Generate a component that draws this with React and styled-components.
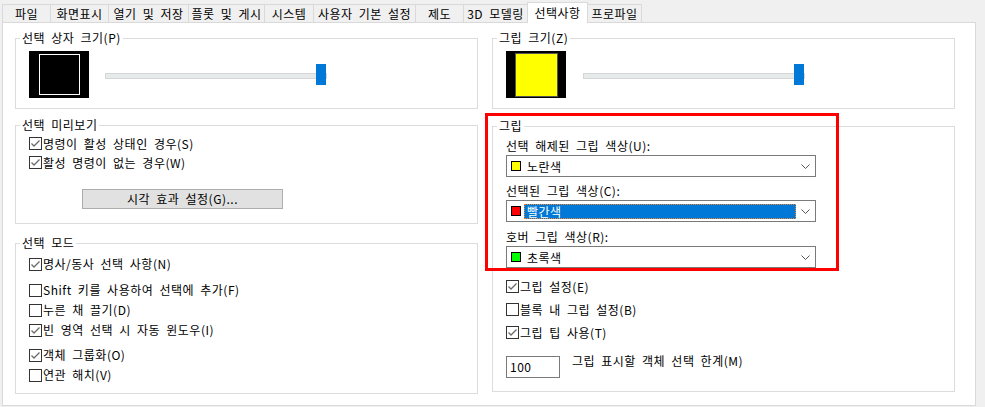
import styled, { createGlobalStyle, css } from "styled-components";

const GlobalStyle = createGlobalStyle`
  html, body { margin: 0; padding: 0; background: #f0f0f0; }
  body {
    font-family: "Noto Sans CJK KR", "Noto Sans", sans-serif;
    font-size: 12px;
    color: #000;
    letter-spacing: 0.5px;
    word-spacing: 3px;
  }
  * { box-sizing: border-box; }
`;

const Window = styled.div`
  width: 985px;
  height: 407px;
  padding: 2px 0 0 2px;
  background: #f0f0f0;
  overflow: hidden;
`;

const TabStrip = styled.div`
  display: flex;
  align-items: flex-end;
  height: 20px;
`;

const Tab = styled.div`
  position: relative;
  z-index: ${(p) => (p.$active ? 2 : 0)};
  display: flex;
  align-items: center;
  justify-content: center;
  width: ${(p) => p.$w}px;
  height: ${(p) => (p.$active ? 21 : 18)}px;
  margin-left: ${(p) => (p.$first ? 0 : -1)}px;
  margin-bottom: ${(p) => (p.$active ? -1 : 0)}px;
  border: 1px solid #d9d9d9;
  border-bottom: none;
  background: ${(p) => (p.$active ? "#fff" : "#f0f0f0")};
  line-height: 14px;
  white-space: nowrap;
`;

const Panel = styled.div`
  display: flex;
  gap: 14px;
  width: 974px;
  height: 384px;
  padding-left: 12px;
  border: 1px solid #d9d9d9;
  background: #fff;
`;

const Column = styled.div`
  position: relative;
  display: flex;
  flex-direction: column;
  width: 463px;
`;

const Group = styled.fieldset`
  margin: ${(p) => p.$mt}px 0 0;
  padding: 0;
  min-width: 0;
  border: 1px solid #dcdcdc;
`;

const Legend = styled.legend`
  margin-left: 4px;
  padding: 0 2px;
  line-height: 14px;
`;

const SizeRow = styled.div`
  display: flex;
  align-items: center;
  padding: 6px 0 10px 13px;
`;

const Preview = styled.div`
  display: flex;
  align-items: center;
  justify-content: center;
  width: 60px;
  height: 47px;
  background: #000;
  flex: none;
`;

const PickBox = styled.div`
  width: 41px;
  height: 41px;
  border: 1px solid #fff;
`;

const GripBox = styled.div`
  width: 43px;
  height: 44px;
  border: 1px solid #555;
  background: #ffff00;
`;

const Slider = styled.div`
  position: relative;
  display: flex;
  justify-content: flex-end;
  align-items: center;
  width: 222px;
  height: 21px;
  margin-left: ${(p) => p.$ml}px;
  padding-right: 1px;

  &::before {
    content: "";
    position: absolute;
    left: 0;
    right: 0;
    top: 9px;
    height: 4px;
    border: 1px solid #d6d6d6;
    background: #e7eaea;
  }
`;

const Thumb = styled.div`
  position: relative;
  width: 10px;
  height: 21px;
  background: #0078d7;
`;

const Body = styled.div`
  display: flex;
  flex-direction: column;
  align-items: flex-start;
  padding: ${(p) => p.$pad};
`;

const CheckRow = styled.div`
  display: flex;
  align-items: center;
  height: ${(p) => p.$h || 20}px;
  margin-top: ${(p) => p.$mt || 0}px;
  line-height: 14px;
  white-space: nowrap;
`;

const Box = styled.span`
  display: flex;
  align-items: center;
  justify-content: center;
  flex: none;
  width: 13px;
  height: 13px;
  margin-right: 1px;
  border: 1px solid #333;
  background: #fff;
`;

const Button = styled.div`
  display: flex;
  align-items: center;
  justify-content: center;
  width: 201px;
  height: 20px;
  margin: 17px 0 0 53px;
  border: 1px solid #adadad;
  background: #e1e1e1;
  line-height: 14px;
`;

const FieldLabel = styled.div`
  margin: ${(p) => p.$mt || 0}px 0 2px;
  line-height: 14px;
`;

const Combo = styled.div`
  display: flex;
  align-items: center;
  width: 310px;
  height: 22px;
  padding-left: 4px;
  border: 1px solid #7a7a7a;
  background: #fff;
`;

const Swatch = styled.span`
  flex: none;
  width: 10px;
  height: 10px;
  margin-right: 3px;
  border: 1px solid #000;
  background: ${(p) => p.$color};
`;

const ComboValue = styled.span`
  flex: 1;
  height: 15px;
  padding-left: 2px;
  line-height: 13px;
  border: 1px solid transparent;
  ${(p) =>
    p.$selected &&
    css`
      background: #0078d7;
      color: #fff;
      border: 1px dotted #f8872c;
    `}
`;

const Arrow = styled.span`
  display: flex;
  justify-content: center;
  width: 19px;
  flex: none;
`;

const NumRow = styled.div`
  display: flex;
  align-items: flex-start;
  margin-top: 12px;
`;

const NumInput = styled.div`
  display: flex;
  align-items: center;
  width: 54px;
  height: 22px;
  padding-left: 3px;
  border: 1px solid #7a7a7a;
  line-height: 14px;
`;

const NumLabel = styled.div`
  margin: -2px 0 0 12px;
  line-height: 14px;
`;

const Marker = styled.div`
  position: absolute;
  left: -7px;
  top: 90px;
  width: 354px;
  height: 158px;
  border: 3px solid #ff0000;
  pointer-events: none;
`;

const tabs = [
  ["파일", 49],
  ["화면표시", 59],
  ["열기 및 저장", 81],
  ["플롯 및 게시", 77],
  ["시스템", 50],
  ["사용자 기본 설정", 103],
  ["제도", 49],
  ["3D 모델링", 65],
  ["선택사항", 61, true],
  ["프로파일", 55],
];

function Check({ checked, children, h, mt }) {
  return (
    <CheckRow $h={h} $mt={mt}>
      <Box>
        {checked && (
          <svg width="11" height="11" viewBox="0 0 11 11">
            <polyline
              points="1.5,5.5 4,8 9.5,2.5"
              fill="none"
              stroke="#6a6a6a"
              strokeWidth="1.3"
            />
          </svg>
        )}
      </Box>
      {children}
    </CheckRow>
  );
}

function ColorCombo({ color, label, selected }) {
  return (
    <Combo>
      <Swatch $color={color} />
      <ComboValue $selected={selected}>{label}</ComboValue>
      <Arrow>
        <svg width="9" height="5" viewBox="0 0 9 5">
          <polyline points="0.5,0.5 4.5,4.5 8.5,0.5" fill="none" stroke="#555" />
        </svg>
      </Arrow>
    </Combo>
  );
}

export default function App() {
  return (
    <Window>
      <GlobalStyle />
      <TabStrip>
        {tabs.map(([name, w, active], i) => (
          <Tab key={name} $w={w} $active={active} $first={i === 0}>
            {name}
          </Tab>
        ))}
      </TabStrip>
      <Panel>
        <Column>
          <Group $mt={8}>
            <Legend>선택 상자 크기(P)</Legend>
            <SizeRow>
              <Preview>
                <PickBox />
              </Preview>
              <Slider $ml={16}>
                <Thumb />
              </Slider>
            </SizeRow>
          </Group>

          <Group $mt={9}>
            <Legend>선택 미리보기</Legend>
            <Body $pad="2px 0 14px 13px">
              <Check checked h={19}>명령이 활성 상태인 경우(S)</Check>
              <Check checked h={19}>활성 명령이 없는 경우(W)</Check>
              <Button>시각 효과 설정(G)...</Button>
            </Body>
          </Group>

          <Group $mt={12}>
            <Legend>선택 모드</Legend>
            <Body $pad="4px 0 8px 13px">
              <Check checked>명사/동사 선택 사항(N)</Check>
              <Check mt={6}>Shift 키를 사용하여 선택에 추가(F)</Check>
              <Check>누른 채 끌기(D)</Check>
              <Check checked>빈 영역 선택 시 자동 윈도우(I)</Check>
              <Check checked mt={5}>객체 그룹화(O)</Check>
              <Check>연관 해치(V)</Check>
            </Body>
          </Group>
        </Column>

        <Column>
          <Group $mt={8}>
            <Legend>그립 크기(Z)</Legend>
            <SizeRow>
              <Preview>
                <GripBox />
              </Preview>
              <Slider $ml={17}>
                <Thumb />
              </Slider>
            </SizeRow>
          </Group>

          <Group $mt={10}>
            <Legend>그립</Legend>
            <Body $pad="6px 0 13px 13px">
              <FieldLabel>선택 해제된 그립 색상(U):</FieldLabel>
              <ColorCombo color="#ffff00" label="노란색" />
              <FieldLabel $mt={7}>선택된 그립 색상(C):</FieldLabel>
              <ColorCombo color="#ff0000" label="빨간색" selected />
              <FieldLabel $mt={8}>호버 그립 색상(R):</FieldLabel>
              <ColorCombo color="#00ff00" label="초록색" />
              <Check checked h={23} mt={7}>그립 설정(E)</Check>
              <Check h={23}>블록 내 그립 설정(B)</Check>
              <Check checked h={23}>그립 팁 사용(T)</Check>
              <NumRow>
                <NumInput>100</NumInput>
                <NumLabel>그립 표시할 객체 선택 한계(M)</NumLabel>
              </NumRow>
            </Body>
          </Group>
          <Marker />
        </Column>
      </Panel>
    </Window>
  );
}
